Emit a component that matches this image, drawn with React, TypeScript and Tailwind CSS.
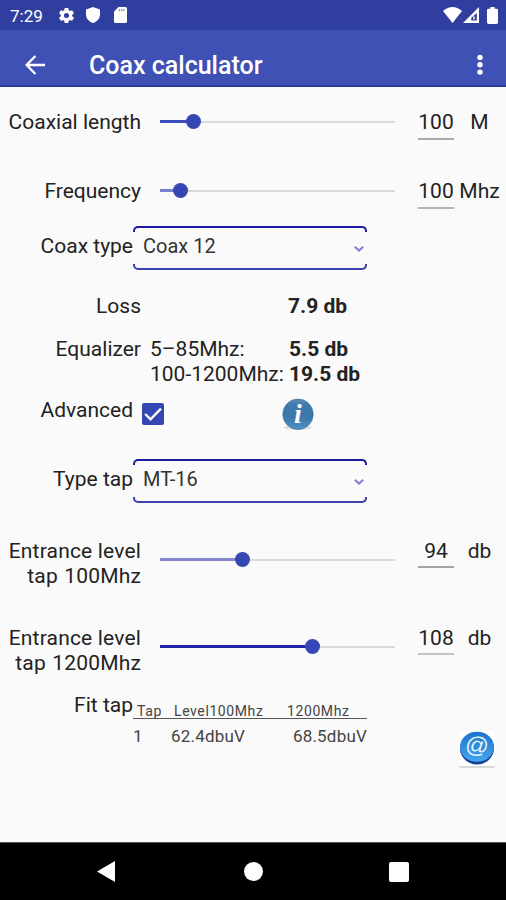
import { useState } from "react";
import type { ReactNode } from "react";

function StatusBar() {
  return (
    <div className="flex h-[30px] items-center bg-[#303f9f] pr-[8px] pl-[10px] text-white">
      <span className="w-[47px] pt-px text-[17px] leading-[30px]">7:29</span>
      <svg className="h-[19px] w-[19px]" viewBox="0 0 24 24" fill="currentColor">
        <path d="M19.14 12.94c.04-.3.06-.61.06-.94 0-.32-.02-.64-.07-.94l2.03-1.58a.49.49 0 0 0 .12-.61l-1.92-3.32a.49.49 0 0 0-.59-.22l-2.39.96c-.5-.38-1.03-.7-1.62-.94l-.36-2.54a.48.48 0 0 0-.48-.41h-3.84a.47.47 0 0 0-.47.41l-.36 2.54c-.59.24-1.13.57-1.62.94l-2.39-.96a.48.48 0 0 0-.59.22L2.74 8.87a.47.47 0 0 0 .12.61l2.03 1.58c-.05.3-.09.63-.09.94s.02.64.07.94l-2.03 1.58a.49.49 0 0 0-.12.61l1.92 3.32c.12.22.37.29.59.22l2.39-.96c.5.38 1.03.7 1.62.94l.36 2.54c.05.24.24.41.48.41h3.84c.24 0 .44-.17.47-.41l.36-2.54c.59-.24 1.13-.56 1.62-.94l2.39.96c.22.08.47 0 .59-.22l1.92-3.32a.47.47 0 0 0-.12-.61zM12 15.2A3.2 3.2 0 1 1 12 8.8a3.2 3.2 0 0 1 0 6.4z" />
      </svg>
      <svg className="ml-[10px] h-[16px] w-[14px]" viewBox="0 0 14 16" fill="currentColor">
        <path d="M7 0 14 2.6V7.5C14 11.5 11 14.8 7 16 3 14.8 0 11.5 0 7.5V2.6z" />
      </svg>
      <svg className="ml-[14px] h-[16px] w-[13px]" viewBox="0 0 13 16">
        <path
          fill="#fff"
          d="M4.5 0H11.5Q13 0 13 1.5V14.5Q13 16 11.5 16H1.5Q0 16 0 14.5V4.5z"
        />
        <path stroke="#303f9f" strokeOpacity=".7" d="M5.3 2v2.2M7.6 2v2.2M9.9 2v2.2" />
      </svg>
      <svg className="ml-auto h-[16px] w-[19px]" viewBox="0 0 19 16" fill="currentColor">
        <path d="M0 4Q9.5-4 19 4L9.5 16z" />
      </svg>
      <svg className="ml-[1px] h-[16px] w-[16px]" viewBox="0 0 16 16">
        <path fill="#fff" d="M16 0V16H0z" />
        <path fill="#303f9f" d="M13.8 6V13.6H8.2V11z" />
        <path fill="#fff" d="M10.3 9.6h1.4v3h-1.4z" />
      </svg>
      <svg className="ml-[8px] h-[17px] w-[11px]" viewBox="0 0 11 17" fill="currentColor">
        <path d="M3.3 0h4.4v1.8H9.6Q11 1.8 11 3.2V15.6Q11 17 9.6 17H1.4Q0 17 0 15.6V3.2Q0 1.8 1.4 1.8H3.3z" />
      </svg>
    </div>
  );
}

function AppBar() {
  return (
    <header className="flex h-[57px] items-center border-b-2 border-[#2c3c9c] bg-[#3f51b5] pt-[14px] pr-[23px] pl-[25px] text-white">
      <svg className="h-[20px] w-[20px]" viewBox="0 0 20 20" fill="none" stroke="currentColor" strokeWidth="2.3">
        <path d="M20 10H2M10.4 1 1.5 10l8.9 9" />
      </svg>
      <h1 className="ml-[44px] pt-[2px] text-[25px] leading-[30px] font-medium">Coax calculator</h1>
      <svg className="ml-auto h-[22px] w-[6px]" viewBox="0 0 6 22" fill="currentColor">
        <circle cx="3" cy="3.5" r="2.7" />
        <circle cx="3" cy="10.8" r="2.7" />
        <circle cx="3" cy="18.1" r="2.7" />
      </svg>
    </header>
  );
}

type SliderRowProps = {
  label: ReactNode;
  value: string;
  unit: string;
  percent: number;
  fill: string;
  track: string;
  underline: string;
  className: string;
};

function SliderRow({ label, value, unit, percent, fill, track, underline, className }: SliderRowProps) {
  return (
    <div className={`flex items-start ${className}`}>
      <div className="w-[141px] text-right">{label}</div>
      <div className={`ml-[19px] flex h-[25px] w-[235px] items-center ${track}`}>
        <div className={`h-[2.5px] ${fill}`} style={{ width: `${percent}%` }} />
        <div className="relative -mx-[7px] h-[15px] w-[15px] shrink-0 rounded-full bg-[#3447b3]" />
        <div className="h-[2px] flex-1 bg-[#d9d9d9]" />
      </div>
      <div className={`ml-[23px] w-[36px] border-b-2 text-center ${underline}`}>{value}</div>
      <div className="w-[51px] text-center">{unit}</div>
    </div>
  );
}

function Spinner({ label, value }: { label: string; value: string }) {
  return (
    <div className="flex h-[44px]">
      <div className="w-[133px] pt-[8px] text-right">{label}</div>
      <div className="flex w-[234px] flex-col justify-between">
        <div className="h-[6px] rounded-t-[5px] border-x-2 border-t-2 border-[#1c1ca0]" />
        <div className="flex items-center justify-between pr-[3px] pb-[3px] pl-[10px] text-[20px] text-[#333]">
          {value}
          <svg className="mt-[4px] h-[6px] w-[10px]" viewBox="0 0 10 6" fill="none" stroke="#8878dc" strokeWidth="2">
            <path d="M.8.8 5 4.6 9.2.8" />
          </svg>
        </div>
        <div className="h-[6px] rounded-b-[5px] border-x-2 border-b-2 border-[#3a42ae]" />
      </div>
    </div>
  );
}

export default function App() {
  const [advanced, setAdvanced] = useState(true);

  return (
    <div className="flex h-[900px] w-[506px] flex-col overflow-hidden bg-[#fafafa] font-[Roboto,sans-serif]">
      <StatusBar />
      <AppBar />
      <main className="flex-1 text-[21px] leading-[25px] whitespace-nowrap text-[#222]">
        <SliderRow
          label="Coaxial length"
          value="100"
          unit="M"
          percent={14.2}
          fill="bg-[#3c4cb8]"
          track="-mt-px"
          underline="h-[30px] border-[#aaa]"
          className="h-[69px] pt-[23px]"
        />
        <SliderRow
          label="Frequency"
          value="100"
          unit="Mhz"
          percent={8.5}
          fill="bg-[#7680cc]"
          track="-mt-px"
          underline="h-[30px] border-[#b5b5b5]"
          className="h-[70px] pt-[23px]"
        />
        <Spinner label="Coax type" value="Coax 12" />

        <div className="flex h-[67px] pt-[24px]">
          <div className="w-[141px] text-right">Loss</div>
          <b className="ml-[147px] font-bold">7.9 db</b>
        </div>
        <div className="flex h-[50px]">
          <div className="w-[141px] text-right">Equalizer</div>
          <div className="ml-[9px] w-[139px]">
            <div>5–85Mhz:</div>
            <div>100-1200Mhz:</div>
          </div>
          <div className="font-bold">
            <div>5.5 db</div>
            <div>19.5 db</div>
          </div>
        </div>

        <div className="flex h-[72px] items-start">
          <div className="w-[133px] pt-[11px] text-right">Advanced</div>
          <button
            className="mt-[16px] ml-[9px] h-[22px] w-[22px] rounded-[2px] bg-[#3447b3]"
            onClick={() => setAdvanced(!advanced)}
          >
            {advanced && (
              <svg viewBox="0 0 22 22" fill="none" stroke="#fff" strokeWidth="2.4">
                <path d="m3.2 11 5.3 5.3L19 5.6" />
              </svg>
            )}
          </button>
          <svg className="mt-[11px] ml-[117px] h-[35px] w-[34px]" viewBox="0 0 34 35">
            <defs>
              <linearGradient id="info" x1="0" y1="0" x2="0" y2="1">
                <stop offset="0" stopColor="#5b8dba" />
                <stop offset=".2" stopColor="#3f79ae" />
                <stop offset=".6" stopColor="#3c78ad" />
                <stop offset="1" stopColor="#4f93c6" />
              </linearGradient>
            </defs>
            <ellipse cx="17" cy="29.5" rx="14" ry="2.5" fill="#dededc" />
            <circle cx="17" cy="16.3" r="15.2" fill="url(#info)" stroke="#396f9f" strokeWidth=".7" />
            <text
              x="17"
              y="24.5"
              textAnchor="middle"
              fill="#fff"
              className="font-['Liberation_Serif',serif] text-[28px] font-bold italic"
            >
              i
            </text>
          </svg>
        </div>
        <Spinner label="Type tap" value="MT-16" />

        <SliderRow
          label={
            <div className="tracking-[0.17px]">
              Entrance level
              <br />
              tap <span className="ml-[1px]">100Mhz</span>
            </div>
          }
          value="94"
          unit="db"
          percent={35}
          fill="bg-[#8588ce]"
          track="mt-[8px]"
          underline="h-[29px] border-[#a5a5a5]"
          className="h-[123px] pt-[36px]"
        />
        <SliderRow
          label={
            <div className="tracking-[0.17px]">
              Entrance level
              <br />
              tap <span className="ml-[1px]">1200Mhz</span>
            </div>
          }
          value="108"
          unit="db"
          percent={64.7}
          fill="bg-[#2222aa]"
          track="mt-[8px]"
          underline="h-[29px] border-[#c4c4c4]"
          className="h-[66px]"
        />

        <div className="flex h-[80px]">
          <div className="w-[133px] pt-px text-right">Fit tap</div>
          <div className="mt-[10px] w-[234px] text-[#444]">
            <div className="flex h-[17px] border-b border-[#555] pl-[4px] text-[14px] leading-[18px] tracking-[0.6px]">
              <span className="w-[37px]">Tap</span>
              <span className="w-[113px]">Level100Mhz</span>
              <span>1200Mhz</span>
            </div>
            <div className="flex pt-[5px] text-[17px] tracking-[0.2px]">
              <span className="w-[38px]">1</span>
              <span>62.4dbuV</span>
              <span className="ml-auto">68.5dbuV</span>
            </div>
          </div>
          <button className="mt-[39px] ml-[92px] h-[37px] w-[36px] rounded-[2px] border-b-2 border-[#d8d8d8] bg-white">
            <svg className="h-[35px] w-[36px]" viewBox="0 0 36 35">
              <defs>
                <linearGradient id="mail" x1="0" y1="0" x2="0" y2="1">
                  <stop offset="0" stopColor="#1c74cd" />
                  <stop offset="1" stopColor="#45a5ed" />
                </linearGradient>
              </defs>
              <ellipse cx="18" cy="17.5" rx="17" ry="16" fill="#153f9c" />
              <ellipse cx="18" cy="15.8" rx="17" ry="15" fill="url(#mail)" />
              <text
                x="18"
                y="22"
                textAnchor="middle"
                fill="#e5f4ff"
                transform="rotate(8 18 16)"
                className="font-['Liberation_Sans',sans-serif] text-[23px]"
              >
                @
              </text>
            </svg>
          </button>
        </div>
      </main>

      <nav className="flex h-[58px] items-center border-t border-[#555] bg-black pl-[97px]">
        <svg className="h-[21px] w-[18px]" viewBox="0 0 18 21" fill="#fff">
          <path d="M18 0V21L0 10.5z" />
        </svg>
        <div className="ml-[129px] h-[19px] w-[19px] rounded-full bg-white" />
        <div className="ml-[126px] h-[20px] w-[20px] rounded-[2px] bg-white" />
      </nav>
    </div>
  );
}
